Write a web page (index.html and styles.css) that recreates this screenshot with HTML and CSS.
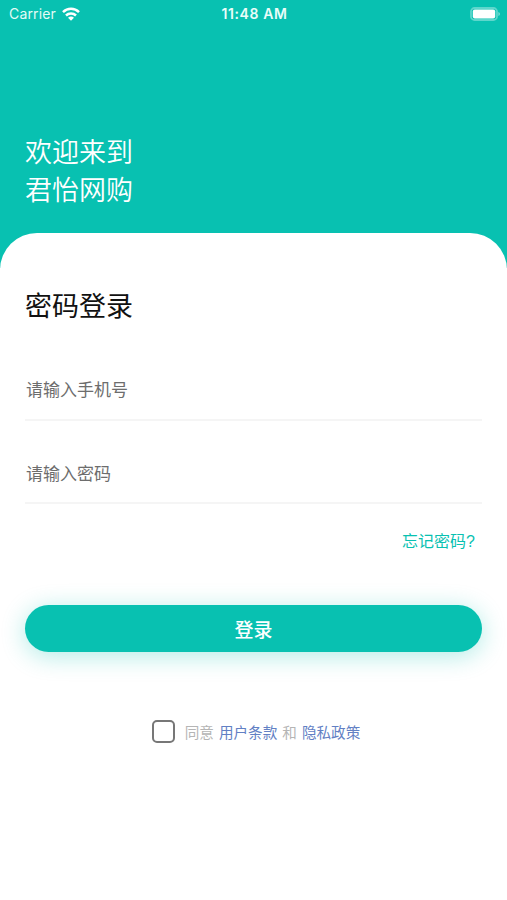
FILE: index.html
```html
<!DOCTYPE html>
<html lang="zh-CN">
<head>
<meta charset="utf-8">
<title>密码登录</title>
<link rel="stylesheet" href="styles.css">
</head>
<body>
<header class="hero">
  <div class="status">
    <div class="carrier"><span>Carrier</span>
      <svg class="wifi" viewBox="0 0 18 14" width="18" height="14"><g fill="none" stroke="#fff" stroke-width="2.5"><path d="M1 5.1a11.5 11.5 0 0 1 16 0"/><path d="M4 8.5a7.2 7.2 0 0 1 10 0"/></g><path d="M6 10.8a4.4 4.4 0 0 1 6 0L9 13.7Z" fill="#fff"/></svg>
    </div>
    <time class="time">11:48 AM</time>
    <svg class="battery" viewBox="0 0 30 14" width="30" height="14"><rect x="1" y="1" width="26" height="12" rx="3.6" fill="none" stroke="#fff" stroke-opacity=".35" stroke-width="1.8"/><rect x="2.8" y="2.6" width="22.4" height="8.8" rx="2" fill="#fff"/><path d="M28.4 4.9v4.2q1.5-.6 1.5-2.1t-1.5-2.1Z" fill="#fff" fill-opacity=".5"/></svg>
  </div>
  <p class="welcome">欢迎来到<br>君怡网购</p>
</header>
<main class="card">
  <h1 class="title">密码登录</h1>
  <div class="field">请输入手机号</div>
  <div class="field second">请输入密码</div>
  <a class="forgot">忘记密码?</a>
  <button class="login">登录</button>
  <div class="agree"><span class="box"></span><span>同意</span><a>用户条款</a><span>和</span><a>隐私政策</a></div>
</main>
</body>
</html>
```
FILE: styles.css
```css
* { box-sizing: border-box; }
body { margin: 0; height: 900px; overflow: hidden; background: #fff; font-family: "Liberation Sans", "Noto Sans CJK SC", sans-serif; }
.hero { height: 268px; background: #08c1b1; color: #fff; }
.status { height: 27px; padding: 0 7px 0 9px; display: grid; grid-template-columns: 1fr auto 1fr; align-items: center; font-family: Inter, sans-serif; font-size: 14px; }
.carrier { display: flex; align-items: center; gap: 6px; color: #e4fbf6; letter-spacing: .15px; }
.time { font-weight: 600; font-size: 14px; letter-spacing: .6px; color: #e9fdf9; }
.battery { justify-self: end; }
.welcome { margin: 105px 0 0 25px; font-size: 27px; line-height: 38px; font-weight: 350; font-family: "Noto Sans CJK SC", sans-serif; }
.card { height: 667px; margin-top: -35px; padding: 54px 25px 0; border-radius: 37px 37px 0 0; background: #fff; display: flex; flex-direction: column; }
.title { margin: 0; height: 40px; line-height: 40px; font-size: 27px; font-weight: 400; color: #111; }
.field { height: 60px; margin-top: 34px; padding: 16px 0 0 1px; line-height: 28px; font-size: 17px; color: #6d6d6d; border-bottom: 2px solid #f5f5f5; }
.second { height: 61px; margin-top: 22px; padding-top: 18px; }
.forgot { align-self: flex-end; margin: 26px 7px 0 0; line-height: 24px; font-size: 16px; color: #08c1b1; }
.login { height: 47px; margin-top: 51px; border: 0; border-radius: 24px; background: #08c1b1; color: #fff; padding: 0; font: 500 19px/45px "Noto Sans CJK SC", sans-serif; box-shadow: 0 4px 24px rgba(8,193,177,.32); }
.agree { margin: 67px 0 0 5px; height: 24px; display: flex; align-items: center; justify-content: center; gap: 5px; font-size: 14.6px; color: #b5b5b5; }
.agree a { color: #6280c4; }
.box { width: 23px; height: 23px; margin-right: 5px; border: 2.5px solid #777; border-radius: 5px; }
```
